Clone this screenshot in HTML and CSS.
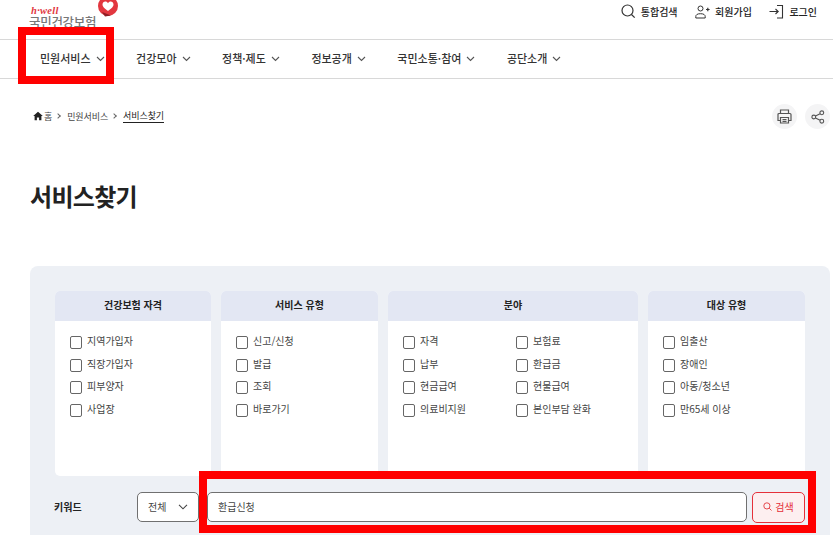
FILE: index.html
```html
<!DOCTYPE html>
<html lang="ko">
<head>
<meta charset="utf-8">
<title>서비스찾기</title>
<link rel="stylesheet" href="styles.css">
</head>
<body>
<header class="top">
  <div class="logo">
    <span class="logo-well">h·well</span>
    <span class="logo-name">국민건강보험</span>
    <svg class="logo-mark" width="22" height="22" viewBox="0 0 22 22"><circle cx="11" cy="8" r="10" fill="#e2373f"/><path d="M5 14l3 4.500 6-1z" fill="#8e1f26"/><path d="M11 13C8.500 11.300 5.500 9 5.500 6.500c0-1.800 1.400-2.900 2.800-2.900 1.100 0 2.100.6 2.700 1.600.6-1 1.600-1.600 2.700-1.600 1.400 0 2.800 1.100 2.800 2.900 0 2.500-3 4.800-5.500 6.500z" fill="#fff"/></svg>
  </div>
  <div class="util">
    <a class="util-item"><svg width="15" height="15" viewBox="0 0 15 15" fill="none" stroke="#333" stroke-width="1.200"><circle cx="6.500" cy="6.500" r="5.500"/><path d="M10.500 10.500l3.200 3.200"/></svg>통합검색</a>
    <a class="util-item"><svg width="15" height="15" viewBox="0 0 15 15" fill="none" stroke="#333" stroke-width="1"><circle cx="5.500" cy="4.500" r="2.500"/><path d="M.8 14v-1.500c0-1.700 1.500-2.800 4.700-2.800s4.700 1.100 4.700 2.800V14z"/><path d="M11 5.500h3.600M12.800 3.700v3.600" stroke-width="1.200"/></svg>회원가입</a>
    <a class="util-item"><svg width="15" height="15" viewBox="0 0 15 15" fill="none" stroke="#333" stroke-width="1.100"><path d="M8 1.500h5.500v12.500H8M.5 7.500h8.500M6.500 5l2.700 2.500-2.700 2.500"/></svg>로그인</a>
  </div>
</header>
<nav class="gnb">
  <a class="gnb-item">민원서비스<svg class="chev" width="9" height="6" viewBox="0 0 9 6"><path d="M1 1l3.500 3.500L8 1"/></svg></a>
  <a class="gnb-item">건강모아<svg class="chev" width="9" height="6" viewBox="0 0 9 6"><path d="M1 1l3.500 3.500L8 1"/></svg></a>
  <a class="gnb-item">정책·제도<svg class="chev" width="9" height="6" viewBox="0 0 9 6"><path d="M1 1l3.500 3.500L8 1"/></svg></a>
  <a class="gnb-item">정보공개<svg class="chev" width="9" height="6" viewBox="0 0 9 6"><path d="M1 1l3.500 3.500L8 1"/></svg></a>
  <a class="gnb-item">국민소통·참여<svg class="chev" width="9" height="6" viewBox="0 0 9 6"><path d="M1 1l3.500 3.500L8 1"/></svg></a>
  <a class="gnb-item">공단소개<svg class="chev" width="9" height="6" viewBox="0 0 9 6"><path d="M1 1l3.500 3.500L8 1"/></svg></a>
</nav>
<div class="crumb-row">
  <div class="crumbs">
    <svg class="home" width="10" height="10" viewBox="0 0 10 10"><path d="M5 .8L.2 5h1.400v4.200h2.300V6.500h2.200v2.700h2.300V5h1.400z" fill="#222"/></svg>
    <span>홈</span><i class="sep"></i><span>민원서비스</span><i class="sep"></i><span class="current">서비스찾기</span>
  </div>
  <div class="tools">
    <span class="tool"><svg width="15" height="15" viewBox="0 0 15 15" fill="none" stroke="#555" stroke-width="1.200"><path d="M3.500 4.500V1h8v3.500M3.500 11.500H1V5.500a1 1 0 0 1 1-1h11a1 1 0 0 1 1 1v6h-2.500"/><path d="M3.500 8.500h8V14h-8zM5.500 10.500h4M5.500 12.300h4"/></svg></span>
    <span class="tool"><svg width="14" height="14" viewBox="0 0 14 14" fill="none" stroke="#555" stroke-width="1.100"><circle cx="2.800" cy="7" r="1.900"/><circle cx="10.800" cy="2.800" r="1.900"/><circle cx="10.800" cy="11.200" r="1.900"/><path d="M4.500 6.100l4.600-2.400M4.500 7.900l4.600 2.400"/></svg></span>
  </div>
</div>
<h1 class="title">서비스찾기</h1>
<section class="panel">
  <div class="cols">
    <div class="col">
      <h2 class="col-head">건강보험 자격</h2>
      <div class="col-body">
        <label class="check"><i class="box"></i>지역가입자</label>
        <label class="check"><i class="box"></i>직장가입자</label>
        <label class="check"><i class="box"></i>피부양자</label>
        <label class="check"><i class="box"></i>사업장</label>
      </div>
    </div>
    <div class="col">
      <h2 class="col-head">서비스 유형</h2>
      <div class="col-body">
        <label class="check"><i class="box"></i>신고/신청</label>
        <label class="check"><i class="box"></i>발급</label>
        <label class="check"><i class="box"></i>조회</label>
        <label class="check"><i class="box"></i>바로가기</label>
      </div>
    </div>
    <div class="col">
      <h2 class="col-head">분야</h2>
      <div class="col-body two">
        <label class="check"><i class="box"></i>자격</label>
        <label class="check"><i class="box"></i>보험료</label>
        <label class="check"><i class="box"></i>납부</label>
        <label class="check"><i class="box"></i>환급금</label>
        <label class="check"><i class="box"></i>현금급여</label>
        <label class="check"><i class="box"></i>현물급여</label>
        <label class="check"><i class="box"></i>의료비지원</label>
        <label class="check"><i class="box"></i>본인부담 완화</label>
      </div>
    </div>
    <div class="col">
      <h2 class="col-head">대상 유형</h2>
      <div class="col-body">
        <label class="check"><i class="box"></i>임출산</label>
        <label class="check"><i class="box"></i>장애인</label>
        <label class="check"><i class="box"></i>아동/청소년</label>
        <label class="check"><i class="box"></i>만65세 이상</label>
      </div>
    </div>
  </div>
  <div class="search">
    <span class="search-label">키워드</span>
    <div class="select">전체<svg width="10" height="6" viewBox="0 0 10 6" fill="none" stroke="#444" stroke-width="1.100"><path d="M1 .8l4 4 4-4"/></svg></div>
    <div class="input">환급신청</div>
    <button class="btn"><svg width="9" height="9" viewBox="0 0 9 9" fill="none" stroke="#e5484d" stroke-width="1"><circle cx="3.900" cy="3.900" r="3.100"/><path d="M6.200 6.200l2.300 2.300"/></svg>검색</button>
  </div>
</section>
<div class="mark mark-nav"></div>
<div class="mark mark-search"></div>
</body>
</html>
```
FILE: styles.css
```css
* { box-sizing: border-box; }
html, body { height: 535px; overflow: hidden; }
body {
  margin: 0;
  position: relative;
  background: #fff;
  color: #222;
  font-family: "Noto Sans CJK KR", "Noto Sans", sans-serif;
  font-size: 10px;
}
a { color: inherit; text-decoration: none; }

.top {
  height: 40px;
  border-bottom: 1px solid #d8d8d8;
  display: flex;
  justify-content: space-between;
  padding: 0 16px 0 29px;
}
.logo { position: relative; width: 92px; height: 39px; }
.logo-well {
  position: absolute; left: 2px; top: 6px;
  font: italic bold 10.500px/9px "Liberation Serif", serif;
  letter-spacing: .3px;
  color: #e2373f;
}
.logo-name {
  position: absolute; left: 0; top: 16px;
  font-size: 12.500px; line-height: 12px; letter-spacing: -.3px; font-weight: 500;
  color: #777; white-space: nowrap;
}
.logo-mark { position: absolute; left: 68px; top: -2px; }
.util { display: flex; gap: 17.500px; height: 23px; align-items: center; }
.util-item {
  display: flex; align-items: center; gap: 5px;
  font-size: 10px; font-weight: 500;
}

.gnb {
  height: 39px;
  border-bottom: 1px solid #d8d8d8;
  display: flex;
  padding: 0 0 3px 40px;
  gap: 31.500px;
  align-items: center;
}
.gnb-item {
  display: flex; align-items: center; gap: 5px;
  font-size: 11px; font-weight: 500; color: #333;
}
.chev { fill: none; stroke: #555; stroke-width: 1.100; margin-top: 3px; }

.crumb-row {
  height: 100px;
  padding: 25px 3px 0 33px;
  display: flex;
  justify-content: space-between;
  align-items: flex-start;
}
.crumbs { display: flex; align-items: center; gap: 2px; height: 24px; font-size: 9px; color: #444; letter-spacing: -.1px; }
.home { margin-right: -1px; }
.sep {
  width: 4px; height: 4px; margin: 0 5px 0 2px;
  border-top: 1px solid #666; border-right: 1px solid #666;
  transform: rotate(45deg);
}
.current { color: #222; border-bottom: 1px solid #222; }
.tools { display: flex; gap: 8px; }
.tool {
  width: 25px; height: 25px; border-radius: 50%;
  background: #f4f4f5;
  display: flex; align-items: center; justify-content: center;
}

.title {
  margin: 0 0 0 30px;
  height: 87px;
  font-size: 24px; line-height: 34px; font-weight: 700; color: #222;
  letter-spacing: -.7px;
}

.panel {
  margin: 0 3px 0 30px;
  height: 280px;
  background: #edf0f5;
  border-radius: 8px;
  padding: 25px;
}
.cols {
  display: grid;
  grid-template-columns: 156px 157px 250px 157px;
  gap: 10px;
  height: 185px;
}
.col { background: #fff; border-radius: 5px; overflow: hidden; }
.col-head {
  margin: 0; height: 30px;
  background: #e3e7f3;
  font-size: 10px; line-height: 28px; font-weight: 700; text-align: center;
  color: #222;
}
.col-body { padding: 8px 0 0 15px; display: grid; grid-auto-rows: 22.700px; align-content: start; }
.two { grid-template-columns: 113px 1fr; }
.check {
  display: flex; align-items: center; gap: 5px;
  font-size: 10px; color: #444; white-space: nowrap;
}
.box {
  width: 12px; height: 13px; transform: translateY(2px);
  border: 1px solid #666; border-radius: 2px; background: #fff;
}

.search { display: flex; align-items: center; margin-top: 15px; height: 32px; }
.search-label { width: 83px; margin-left: -1px; padding-bottom: 2px; font-size: 10px; font-weight: 700; color: #222; }
.select {
  width: 62px; height: 30px;
  border: 1px solid #707070; border-radius: 5px; background: #fff;
  display: flex; align-items: center; gap: 12px; padding: 0 0 1px 10px;
  font-size: 10px; color: #444;
}
.input {
  margin-left: 8px;
  width: 540px; height: 30px;
  border: 1px solid #707070; border-radius: 5px; background: #fff;
  display: flex; align-items: center; padding: 0 0 2px 10px;
  font-size: 10px; color: #444;
}
.btn {
  margin-left: 5px;
  width: 53px; height: 31px;
  border: 1px solid #e5303a; border-radius: 5px; background: #fdeff0;
  display: flex; align-items: center; justify-content: center; gap: 3px;
  font: 10px "Noto Sans CJK KR", sans-serif; color: #e5303a; padding: 0 0 2px;
}

.mark { position: absolute; border: 8px solid #f00; pointer-events: none; }
.mark-nav { left: 18px; top: 27px; width: 96px; height: 57px; }
.mark-search { left: 199px; top: 471px; width: 617px; height: 62px; }
```
